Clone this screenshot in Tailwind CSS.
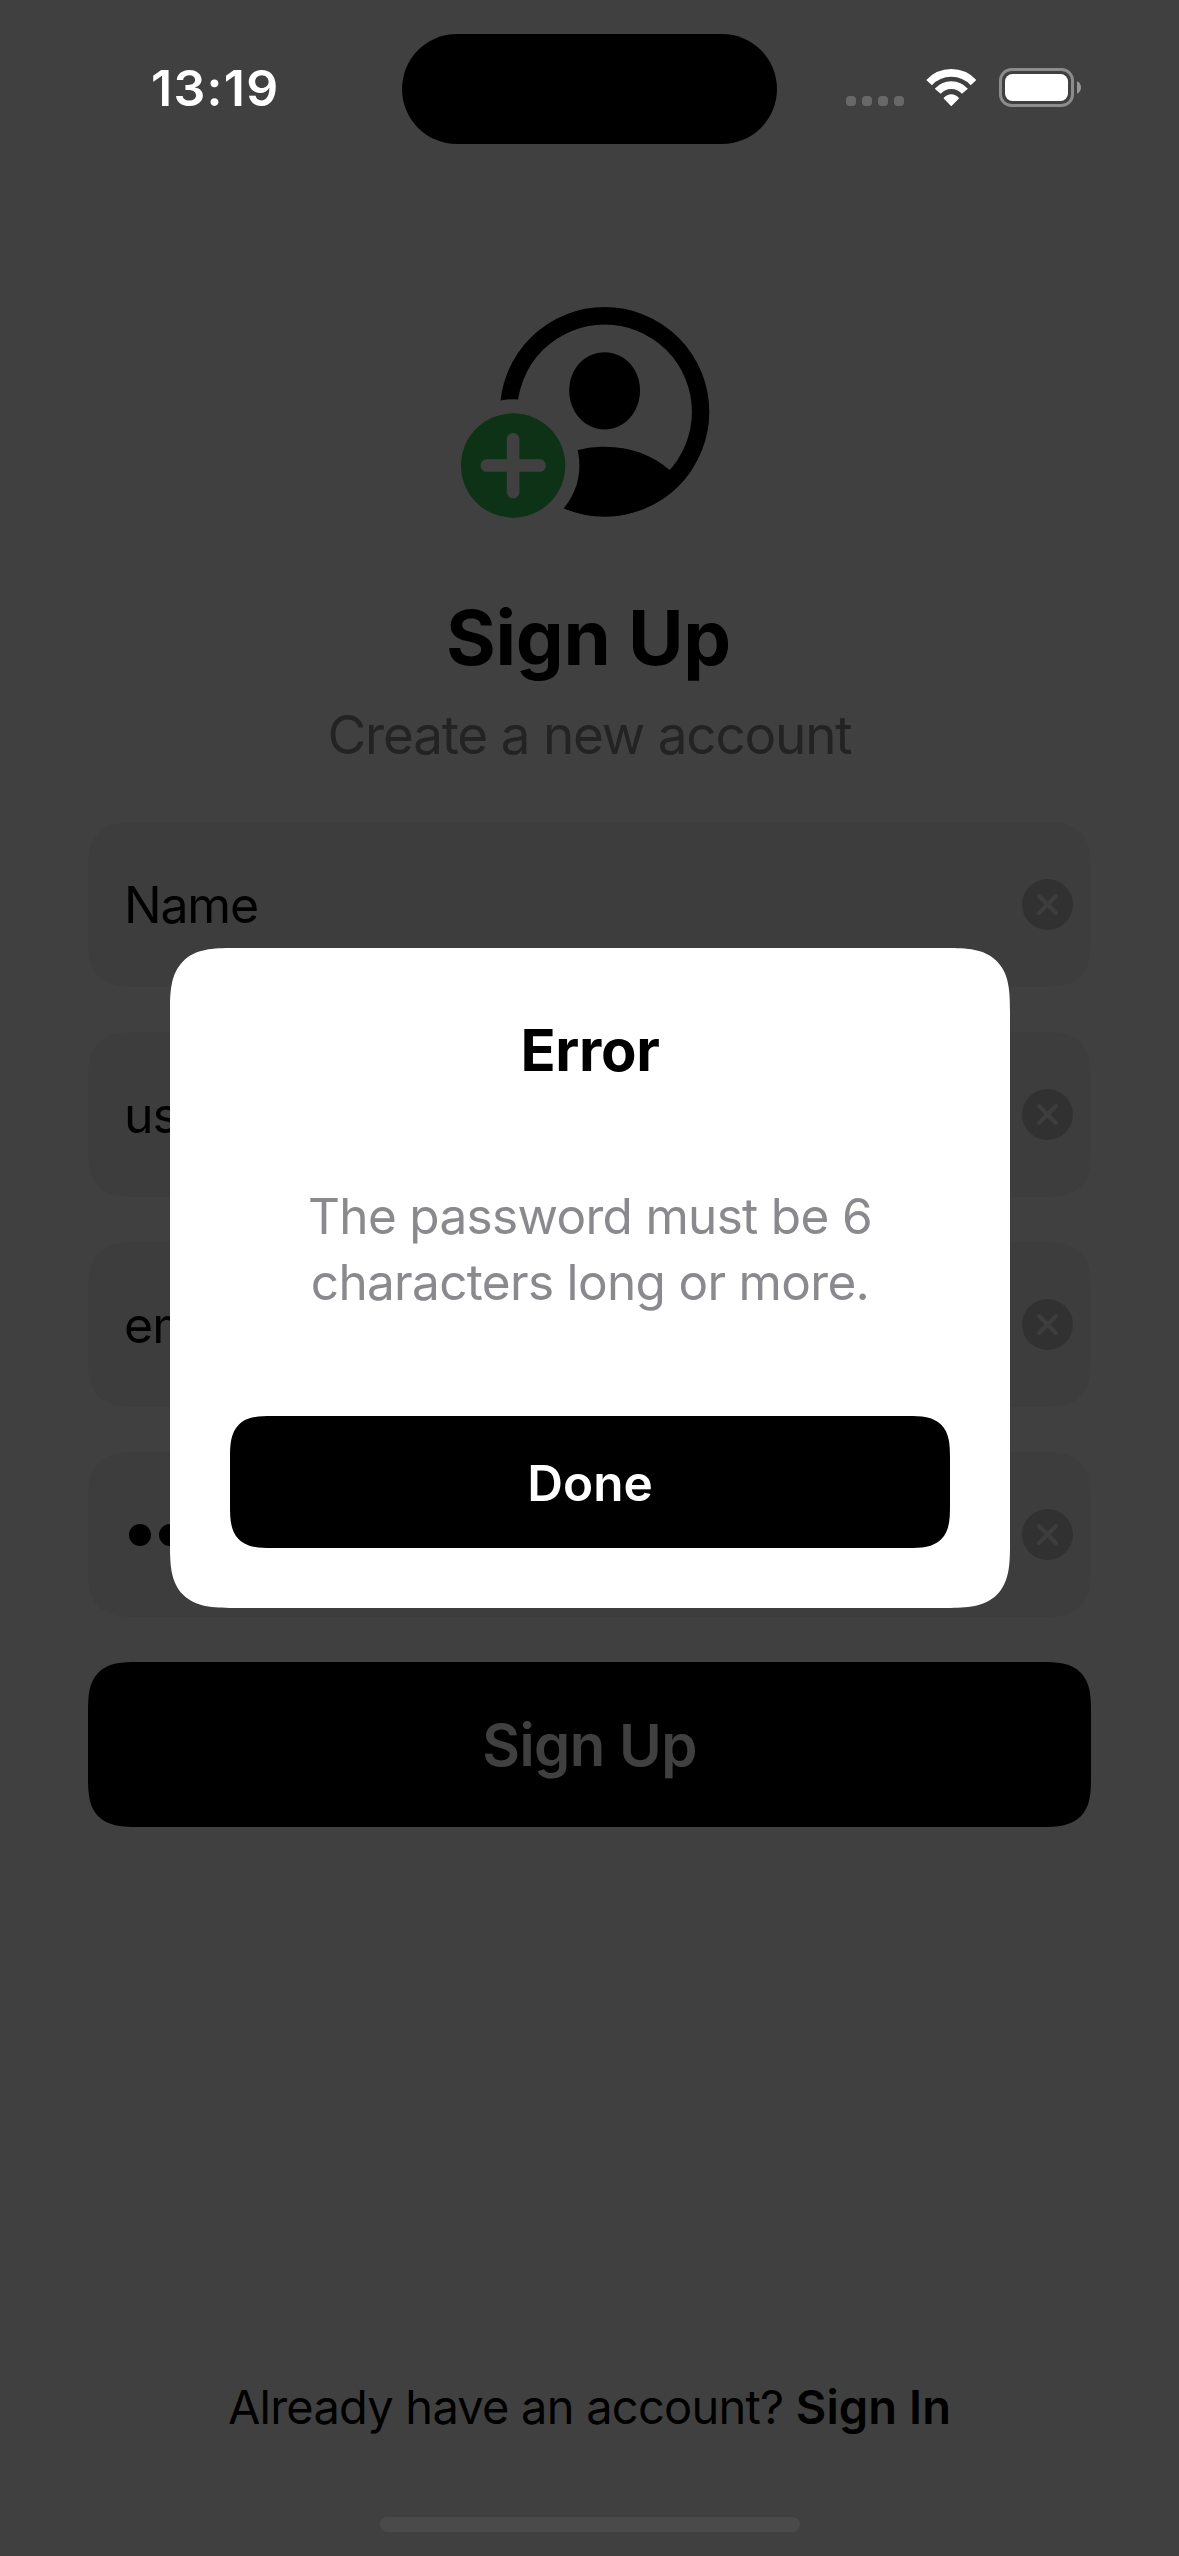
<!DOCTYPE html>
<html lang="en">
<head>
<meta charset="utf-8">
<title>Sign Up</title>
<script src="https://cdn.jsdelivr.net/npm/@tailwindcss/browser@4"></script>
</head>
<body class="bg-white">
<div class="relative flex h-[2556px] w-[1179px] flex-col overflow-hidden bg-white font-['Inter',sans-serif] text-black">

  <!-- Status bar -->
  <header class="relative z-20 flex items-start pt-[33px]">
    <div class="mt-[25px] w-[402px] pl-[151px] text-[50px] leading-[60px] font-semibold tracking-[1.32px] text-white">13:19</div>
    <div class="mt-px h-[110px] w-[375px] rounded-full bg-black"></div>
    <div class="mt-[35px] flex gap-[22px] pl-[69px]">
      <svg class="h-[39px] w-[58px]" viewBox="0 0 58 39" fill="#686868">
        <rect x="0" y="28" width="10" height="10" rx="4"/>
        <rect x="16" y="28" width="10" height="10" rx="4"/>
        <rect x="32" y="28" width="10" height="10" rx="4"/>
        <rect x="48" y="28" width="10" height="10" rx="4"/>
      </svg>
      <svg class="h-[39px] w-[51px]" viewBox="0 0 51 39" fill="none" stroke="#fff">
        <path d="M3.1 14.6A30.2 30.2 0 0 1 47.5 14.6" stroke-width="7.6"/>
        <path d="M11.7 23.3A18 18 0 0 1 38.9 23.3" stroke-width="7.8"/>
        <path d="M25.3 37.2L18.4 30.3C22.2 25.8 28.4 25.8 32.2 30.3Z" fill="#fff" stroke-width="1.4" stroke-linejoin="round"/>
      </svg>
      <svg class="h-[39px] w-[82px]" viewBox="0 0 82 39">
        <rect x="1.5" y="1.5" width="72" height="36" rx="11" fill="none" stroke="#8c8c8c" stroke-width="3"/>
        <rect x="6" y="6" width="63" height="27" rx="7.5" fill="#fff"/>
        <path d="M78 13.2C80.6 14.3 82 16.8 82 19.5C82 22.2 80.6 24.7 78 25.8Z" fill="#969696"/>
      </svg>
    </div>
  </header>

  <!-- Sign-up screen -->
  <main class="flex flex-col items-center">
    <svg class="mt-[162px] h-[212px] w-[257px]" viewBox="461 306 257 212">
      <defs>
        <mask id="gap" maskUnits="userSpaceOnUse" x="461" y="306" width="257" height="212">
          <rect x="461" y="306" width="257" height="212" fill="#fff"/>
          <circle cx="513.1" cy="465.5" r="66.3" fill="#000"/>
        </mask>
        <clipPath id="disc"><circle cx="604.6" cy="411.8" r="104.8"/></clipPath>
      </defs>
      <g mask="url(#gap)">
        <circle cx="604.6" cy="411.8" r="96" fill="none" stroke="#000" stroke-width="17.4"/>
        <path clip-path="url(#disc)" d="M539 470.3C555 455 580 446.7 604.6 446.7C630 446.7 653 455 670 470.3L709 470V520H500V470Z"/>
        <path d="M604.6 352.3C624 352.3 640 368.5 640 390.5C640 412.5 624 429.4 604.6 429.4C585.2 429.4 569.2 412.5 569.2 390.5C569.2 368.5 585.2 352.3 604.6 352.3Z"/>
      </g>
      <circle cx="513.1" cy="465.5" r="52.2" fill="#36c558"/>
      <path d="M486.8 465.5H539.6M513.1 439.3V492" stroke="#fff" stroke-width="12.6" stroke-linecap="round"/>
    </svg>
    <h1 class="mt-[74px] mr-[2px] text-[76px] leading-[90px] font-bold tracking-[-0.34px]">Sign Up</h1>
    <p class="mt-[21px] text-[53px] leading-[64px] tracking-[-1.2px] text-[#8a8a8e]">Create a new account</p>

    <form class="mt-[55px] flex w-[1003px] flex-col gap-[45px]">
      <div class="flex h-[165px] items-center justify-between rounded-[50px] bg-[#f2f2f2] pr-[18px] pl-9 [corner-shape:superellipse(1.565)]">
        <span class="pt-0.5 text-[50px] tracking-[-1.2px]">Name</span>
        <svg class="size-[51px]" viewBox="0 0 51 51"><circle cx="25.5" cy="25.5" r="25.5" fill="#c2c2c2"/><path d="M17 17L34 34M34 17L17 34" stroke="#f2f2f2" stroke-width="4" stroke-linecap="round"/></svg>
      </div>
      <div class="flex h-[165px] items-center justify-between rounded-[50px] bg-[#f2f2f2] pr-[18px] pl-9 [corner-shape:superellipse(1.565)]">
        <span class="pt-0.5 text-[50px] tracking-[-1px]">us</span>
        <svg class="size-[51px]" viewBox="0 0 51 51"><circle cx="25.5" cy="25.5" r="25.5" fill="#c2c2c2"/><path d="M17 17L34 34M34 17L17 34" stroke="#f2f2f2" stroke-width="4" stroke-linecap="round"/></svg>
      </div>
      <div class="flex h-[165px] items-center justify-between rounded-[50px] bg-[#f2f2f2] pr-[18px] pl-9 [corner-shape:superellipse(1.565)]">
        <span class="pt-0.5 text-[50px] tracking-[-1px]">em</span>
        <svg class="size-[51px]" viewBox="0 0 51 51"><circle cx="25.5" cy="25.5" r="25.5" fill="#c2c2c2"/><path d="M17 17L34 34M34 17L17 34" stroke="#f2f2f2" stroke-width="4" stroke-linecap="round"/></svg>
      </div>
      <div class="flex h-[165px] items-center justify-between rounded-[50px] bg-[#f2f2f2] pr-[18px] pl-[41px] [corner-shape:superellipse(1.565)]">
        <div class="flex gap-2">
          <i class="size-[22px] rounded-full bg-black"></i>
          <i class="size-[22px] rounded-full bg-black"></i>
        </div>
        <svg class="size-[51px]" viewBox="0 0 51 51"><circle cx="25.5" cy="25.5" r="25.5" fill="#c2c2c2"/><path d="M17 17L34 34M34 17L17 34" stroke="#f2f2f2" stroke-width="4" stroke-linecap="round"/></svg>
      </div>
      <button type="button" class="h-[165px] rounded-[50px] bg-black pt-0.5 text-[58px] font-semibold tracking-[-0.5px] text-white [corner-shape:superellipse(1.565)]">Sign Up</button>
    </form>
  </main>

  <footer class="mt-auto flex flex-col items-center pb-6">
    <p class="text-[47px] leading-[60px] tracking-[-0.77px]">Already have an account? <a class="font-semibold tracking-[0.1px]">Sign In</a></p>
    <div class="relative z-20 mt-20 h-[15px] w-[420px] rounded-full bg-[#4a4a4a]"></div>
  </footer>

  <!-- Dimmed backdrop with the alert -->
  <div class="absolute inset-0 z-10 flex items-center justify-center bg-black/75">
    <section class="ml-px flex h-[660px] w-[840px] flex-col rounded-[63px] bg-white px-[60px] pt-[66px] pb-[60px] text-center [corner-shape:superellipse(1.565)]">
      <h2 class="text-[58px] leading-[72px] font-bold tracking-[-0.3px]">Error</h2>
      <p class="mt-[97px] text-[49.5px] leading-[66px] tracking-[-0.68px] text-[#8a8a8e]">The password must be 6<br>characters long or more.</p>
      <button type="button" class="mt-auto h-[132px] rounded-[42px] bg-black pt-0.5 text-[49.5px] font-semibold text-white [corner-shape:superellipse(1.565)]">Done</button>
    </section>
  </div>
</div>
</body>
</html>
